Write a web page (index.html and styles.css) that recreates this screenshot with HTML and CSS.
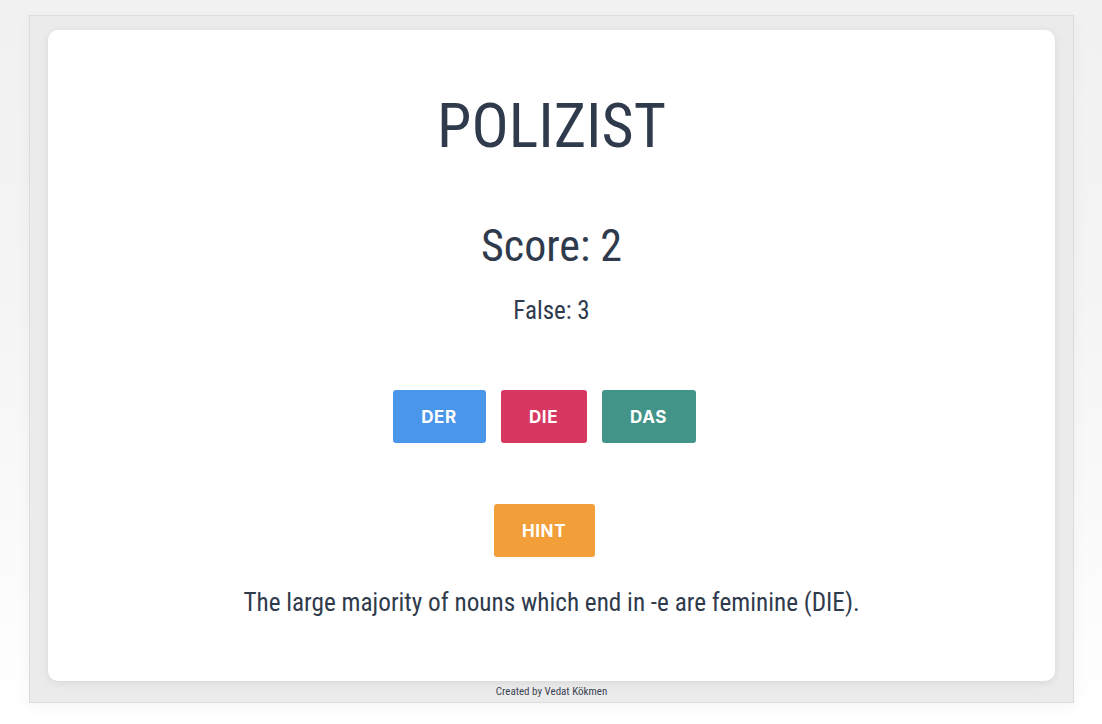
FILE: index.html
```html
<!DOCTYPE html>
<html>
<head>
<meta charset="utf-8">
<link rel="stylesheet" href="styles.css">
</head>
<body>
<div class="page">
  <div class="frame">
    <div class="card">
      <h1 class="word">POLIZIST</h1>
      <h2 class="score">Score: 2</h2>
      <p class="false">False: 3</p>
      <div class="choices">
        <button class="btn der">DER</button>
        <button class="btn die">DIE</button>
        <button class="btn das">DAS</button>
      </div>
      <div class="hint-row">
        <button class="btn hint">HINT</button>
      </div>
      <p class="hint-text">The large majority of nouns which end in -e are feminine (DIE).</p>
    </div>
    <div class="footer">Created by Vedat Kökmen</div>
  </div>
</div>
</body>
</html>
```
FILE: styles.css
```css
html, body {
  margin: 0;
  height: 100%;
}
body {
  background: linear-gradient(#f1f1f1 0%, #f4f4f4 40%, #ffffff 100%);
  font-family: "Roboto Condensed", Roboto, "Liberation Sans", sans-serif;
  font-stretch: 75%;
  color: #2f3b4c;
}
.page {
  padding-top: 15px;
}
.frame {
  width: 1045px;
  margin: 0 0 0 29px;
  border: 1px solid #dcdcdc;
  background: #ebebeb;
  padding: 14px 18px 0 18px;
  box-sizing: border-box;
  box-shadow: 0 4px 14px rgba(0,0,0,0.04);
}
.card {
  background: #fff;
  border-radius: 10px;
  height: 651px;
  box-sizing: border-box;
  box-shadow: 0 2px 8px rgba(0,0,0,0.08);
  display: flex;
  flex-direction: column;
  align-items: center;
  padding-top: 60px;
}
.word {
  margin: 0;
  font-weight: 400;
  font-size: 62px;
  line-height: 72px;
}
.score {
  margin: 58px 0 0 0;
  font-weight: 400;
  font-size: 44px;
  line-height: 52px;
}
.false {
  margin: 25px 0 0 0;
  font-size: 25px;
  line-height: 28px;
}
.choices {
  display: flex;
  margin-top: 65px;
}
.btn {
  border: none;
  border-radius: 3px;
  color: #fff;
  font-family: Inter, "Open Sans", sans-serif;
  font-stretch: normal;
  font-weight: 700;
  font-size: 17px;
  height: 53px;
  letter-spacing: 0.6px;
  padding: 0;
  margin-right: 15px;
}
.der { background: #4a96ea; width: 93px; }
.die { background: #d63862; width: 86px; }
.das { background: #429488; width: 94px; }
.hint-row {
  margin-top: 61px;
}
.hint { background: #f29f3a; width: 101px; }
.hint-text {
  margin: 31px 0 0 0;
  font-size: 25.2px;
  line-height: 30px;
}
.footer {
  height: 21px;
  text-align: center;
  font-size: 11px;
  line-height: 21px;
  color: #3a4352;
}
```
